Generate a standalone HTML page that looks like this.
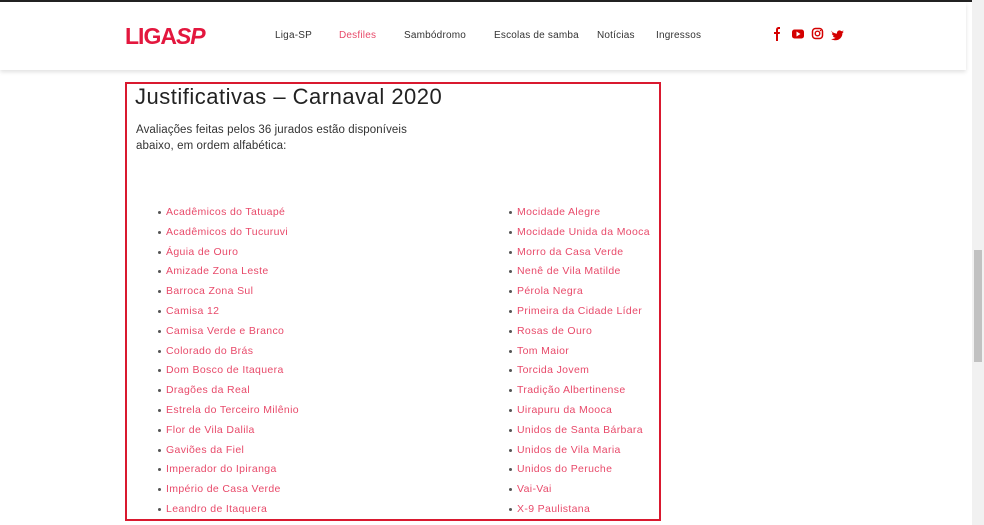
<!DOCTYPE html>
<html><head><meta charset="utf-8"><style>
*{margin:0;padding:0;box-sizing:border-box}
html,body{width:984px;height:525px;overflow:hidden}
body{background:#fff;font-family:"Liberation Sans",sans-serif;position:relative}
.topline{position:absolute;left:0;top:0;width:972px;height:2px;background:#222}
.header{position:absolute;left:0;top:2px;width:966px;height:68px;background:#fff;box-shadow:0 2px 4px rgba(0,0,0,0.12)}
.logo{position:absolute;left:125px;top:21px;color:#e3173e;font-weight:bold;font-size:23px;letter-spacing:-1px}
.nav a{position:absolute;top:28px;font-size:10px;color:#333;text-decoration:none;letter-spacing:.2px}
.icons{position:absolute;left:772px;top:24px}
.sb{position:absolute;left:972px;top:0;width:12px;height:525px;background:#f1f1f1}
.thumb{position:absolute;left:974px;top:250px;width:8px;height:112px;background:#c1c1c1}
.box{position:absolute;left:125px;top:82px;width:536px;height:439px;border:2px solid #d9192f}
h1{position:absolute;left:135px;top:84px;font-size:22px;font-weight:normal;color:#222;letter-spacing:.5px}
.p{position:absolute;left:136px;top:122px;font-size:11.5px;line-height:16px;color:#333;width:290px;letter-spacing:.1px}
ul{position:absolute;list-style:none}
li{height:19.8px;font-size:10.5px;color:#e84a6a;position:relative;line-height:12px;letter-spacing:.35px;white-space:nowrap}
li:before{content:"";position:absolute;left:-8px;top:5px;width:3px;height:3px;border-radius:50%;background:#555}
</style></head><body>
<div class="topline"></div>
<div class="header">
<div class="logo">LIGA<span style="font-style:italic">SP</span></div>
<div class="nav">
<a style="left:275px">Liga-SP</a>
<a style="left:339px;color:#e84a6a">Desfiles</a>
<a style="left:404px">Sambódromo</a>
<a style="left:494px">Escolas de samba</a>
<a style="left:597px">Notícias</a>
<a style="left:656px">Ingressos</a>
</div>
<svg class="icons" width="75" height="16" viewBox="0 0 75 16">
<path d="M4 15V8H2V6H4V4C4 2 5 1 7 1H8V3H7C6.3 3 6 3.3 6 4V6H8L7.7 8H6V15Z" fill="#d40000"/>
<rect x="20" y="3.5" width="12" height="9" rx="2.5" fill="#d40000"/><path d="M24.5 5.5V10.5L28.5 8Z" fill="#fff"/>
<rect x="40.5" y="2.5" width="10" height="10" rx="3" fill="none" stroke="#d40000" stroke-width="1.5"/><circle cx="45.5" cy="7.5" r="2.3" fill="none" stroke="#d40000" stroke-width="1.4"/><circle cx="48.5" cy="4.6" r=".7" fill="#d40000"/>
<path d="M59 4.5C60.5 6.5 62.5 7.5 65 7.6C64.6 5 67.5 3.3 69.4 5.2C70.2 5 70.9 4.7 71.5 4.4C71.2 5.1 70.8 5.6 70.2 6C70.8 5.9 71.3 5.8 71.8 5.6C71.4 6.2 70.9 6.7 70.4 7.1C70.6 11.5 66.5 15.4 61.5 14C60.5 13.8 59.8 13.4 59 13C61 13.2 62.5 12.6 63.5 11.8C62.3 11.8 61.2 11 60.9 9.9C61.3 10 61.7 10 62.1 9.9C60.8 9.6 59.9 8.4 59.9 7.1C60.3 7.3 60.7 7.4 61.2 7.4C60 6.6 59.5 5.8 59 4.5Z" fill="#d40000"/>
</svg>
</div>
<div class="box"></div>
<h1>Justificativas – Carnaval 2020</h1>
<div class="p">Avaliações feitas pelos 36 jurados estão disponíveis abaixo, em ordem alfabética:</div>
<ul style="left:166px;top:206px">
<li>Acadêmicos do Tatuapé</li><li>Acadêmicos do Tucuruvi</li><li>Águia de Ouro</li><li>Amizade Zona Leste</li><li>Barroca Zona Sul</li><li>Camisa 12</li><li>Camisa Verde e Branco</li><li>Colorado do Brás</li><li>Dom Bosco de Itaquera</li><li>Dragões da Real</li><li>Estrela do Terceiro Milênio</li><li>Flor de Vila Dalila</li><li>Gaviões da Fiel</li><li>Imperador do Ipiranga</li><li>Império de Casa Verde</li><li>Leandro de Itaquera</li>
</ul>
<ul style="left:517px;top:206px">
<li>Mocidade Alegre</li><li>Mocidade Unida da Mooca</li><li>Morro da Casa Verde</li><li>Nenê de Vila Matilde</li><li>Pérola Negra</li><li>Primeira da Cidade Líder</li><li>Rosas de Ouro</li><li>Tom Maior</li><li>Torcida Jovem</li><li>Tradição Albertinense</li><li>Uirapuru da Mooca</li><li>Unidos de Santa Bárbara</li><li>Unidos de Vila Maria</li><li>Unidos do Peruche</li><li>Vai-Vai</li><li>X-9 Paulistana</li>
</ul>
<div class="sb"></div><div class="thumb"></div>
</body></html>
